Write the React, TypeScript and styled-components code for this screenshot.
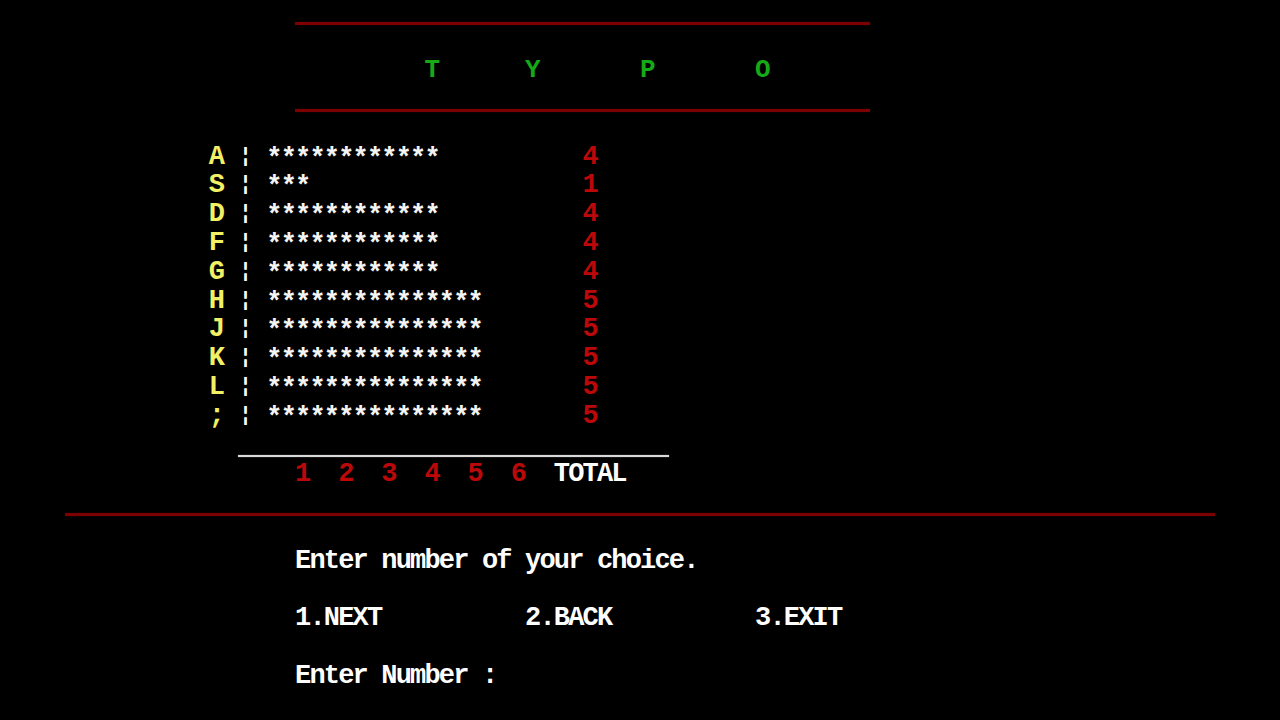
import React from "react";
import styled, { createGlobalStyle } from "styled-components";

const CW = 14.375; // one text-mode cell width
const RH = 28.8; // one text-mode row height
const FS = 27;

const GlobalStyle = createGlobalStyle`
  html, body {
    margin: 0;
    padding: 0;
    background: #000;
  }
  body {
    width: 1280px;
    height: 720px;
    overflow: hidden;
  }
`;

const Screen = styled.div`
  width: ${80 * CW}px;
  height: 720px;
  margin-left: 65px;
  display: flex;
  flex-direction: column;
  font-family: "Liberation Mono", "DejaVu Sans Mono", monospace;
  font-weight: 700;
  font-size: ${FS}px;
  letter-spacing: ${CW - 0.6 * FS}px;
  line-height: ${RH}px;
  white-space: pre;
  color: #ffffff;
`;

const Rule = styled.div<{ $top: number; $start: number; $span: number; $color: string; $thick: number }>`
  flex: none;
  margin-top: ${(p) => p.$top}px;
  margin-left: ${(p) => p.$start * CW}px;
  width: ${(p) => p.$span * CW}px;
  height: ${(p) => p.$thick}px;
  background: ${(p) => p.$color};
  box-shadow: 0 0 1px ${(p) => p.$color};
`;

const TextRow = styled.div<{ $top?: number; $indent: number }>`
  flex: none;
  display: flex;
  height: ${RH}px;
  margin-top: ${(p) => p.$top ?? 0}px;
  padding-left: ${(p) => p.$indent * CW}px;
`;

const Cell = styled.span<{ $w: number; $color: string }>`
  flex: none;
  width: ${(p) => p.$w * CW}px;
  color: ${(p) => p.$color};
`;

const TitleLetter = styled(Cell)`
  font-size: 26px;
  letter-spacing: 0;
`;

const Separator = styled.span`
  flex: none;
  box-sizing: border-box;
  width: ${2 * CW}px;
  padding-left: 2px;
  font-size: 20px;
  line-height: ${RH}px;
  letter-spacing: 0;
  color: #ffffff;
`;

const Bar = styled.span`
  flex: none;
  box-sizing: border-box;
  width: ${22 * CW}px;
  height: ${RH}px;
  padding-top: 5px;
  line-height: ${RH - 5}px;
  color: #f4f4f4;
`;

const ChartBlock = styled.div`
  flex: none;
  display: flex;
  flex-direction: column;
  margin-top: 30.6px;
`;

const YELLOW = "#f2f064";
const RED = "#bc0808";
const GREEN = "#16aa16";
const DARKRED = "#7c0000";

const data: [string, number][] = [
  ["A", 4],
  ["S", 1],
  ["D", 4],
  ["F", 4],
  ["G", 4],
  ["H", 5],
  ["J", 5],
  ["K", 5],
  ["L", 5],
  [";", 5],
];

const title: [string, number][] = [
  ["T", 7],
  ["Y", 8],
  ["P", 8],
  ["O", 1],
];

const options = ["1.NEXT", "2.BACK", "3.EXIT"];

export default function App() {
  return (
    <>
      <GlobalStyle />
      <Screen>
        <Rule $top={22} $start={16} $span={40} $color={DARKRED} $thick={3} />
        <TextRow $top={30.6} $indent={25}>
          {title.map(([l, w]) => (
            <TitleLetter key={l} $w={w} $color={GREEN}>
              {l}
            </TitleLetter>
          ))}
        </TextRow>
        <Rule $top={24.6} $start={16} $span={40} $color={DARKRED} $thick={3} />

        <ChartBlock>
          {data.map(([k, n]) => (
            <TextRow key={k} $indent={10}>
              <Cell $w={2} $color={YELLOW}>{k}</Cell>
              <Separator>¦</Separator>
              <Bar>{"*".repeat(n * 3)}</Bar>
              <Cell $w={1} $color={RED}>{n}</Cell>
            </TextRow>
          ))}
        </ChartBlock>

        <Rule $top={24.4} $start={12} $span={30} $color="#d8d8d8" $thick={2} />
        <TextRow $top={2.6} $indent={16}>
          {[1, 2, 3, 4, 5, 6].map((n) => (
            <Cell key={n} $w={3} $color={RED}>
              {n}
            </Cell>
          ))}
          <Cell $w={5} $color="#ffffff">TOTAL</Cell>
        </TextRow>

        <Rule $top={24.6} $start={0} $span={80} $color={DARKRED} $thick={3} />

        <TextRow $top={30.6} $indent={16}>
          <Cell $w={30} $color="#ffffff">Enter number of your choice.</Cell>
        </TextRow>
        <TextRow $top={RH} $indent={16}>
          {options.map((o) => (
            <Cell key={o} $w={16} $color="#ffffff">
              {o}
            </Cell>
          ))}
        </TextRow>
        <TextRow $top={RH} $indent={16}>
          <Cell $w={20} $color="#ffffff">Enter Number :</Cell>
        </TextRow>
      </Screen>
    </>
  );
}
